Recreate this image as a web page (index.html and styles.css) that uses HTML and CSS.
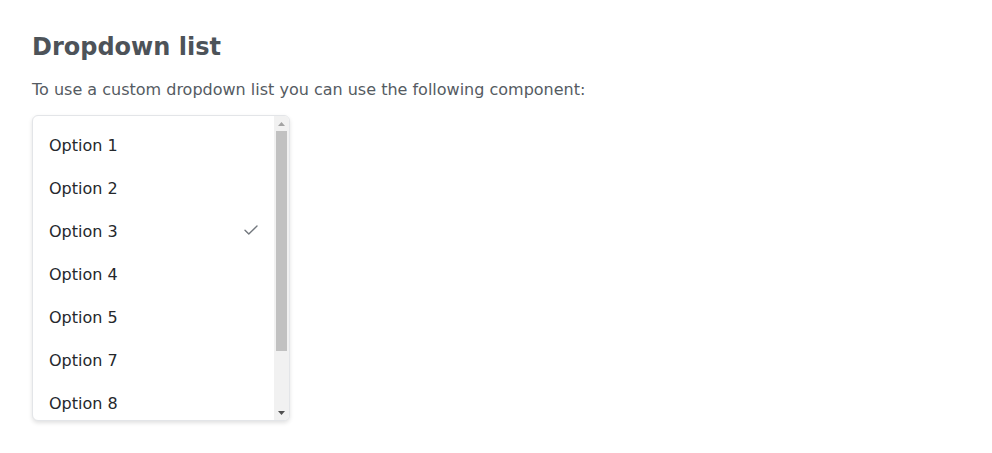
FILE: index.html
```html
<!DOCTYPE html>
<html lang="en">
<head>
<meta charset="utf-8">
<title>Dropdown list</title>
<link rel="stylesheet" href="styles.css">
</head>
<body>
<main class="page">
  <h1 class="title">Dropdown list</h1>
  <p class="intro">To use a custom dropdown list you can use the following component:</p>
  <div class="dropdown">
    <ul class="options" role="listbox">
      <li class="option">Option 1</li>
      <li class="option">Option 2</li>
      <li class="option selected">Option 3
        <svg class="check" width="14" height="10" viewBox="0 0 14 10" aria-hidden="true"><path d="M1 5.2 L4.8 9 L13 1" fill="none" stroke="currentColor" stroke-width="1.4" stroke-linecap="round" stroke-linejoin="round"/></svg>
      </li>
      <li class="option">Option 4</li>
      <li class="option">Option 5</li>
      <li class="option">Option 7</li>
      <li class="option">Option 8</li>
    </ul>
    <div class="scrollbar" aria-hidden="true">
      <div class="sb-button">
        <svg width="7" height="4" viewBox="0 0 7 4"><path d="M3.5 0 L7 4 L0 4 Z" fill="#a3a3a3"/></svg>
      </div>
      <div class="sb-track">
        <div class="sb-thumb"></div>
      </div>
      <div class="sb-button">
        <svg width="7" height="4" viewBox="0 0 7 4"><path d="M0 0 L7 0 L3.5 4 Z" fill="#505050"/></svg>
      </div>
    </div>
  </div>
</main>
</body>
</html>
```

FILE: styles.css
```css
html, body {
  margin: 0;
  padding: 0;
  background: #ffffff;
}

body {
  font-family: "DejaVu Sans", sans-serif;
}

.page {
  padding: 33px 32px 32px;
}

.title {
  margin: 0 0 16px;
  font-size: 24px;
  line-height: 29px;
  font-weight: bold;
  color: #4d5359;
}

.intro {
  margin: 0 0 13px;
  font-size: 16px;
  line-height: 24px;
  color: #555b62;
}

.dropdown {
  display: flex;
  width: 256px;
  height: 304px;
  border: 1px solid #e3e5e8;
  border-radius: 6px;
  box-shadow: 0 2px 4px rgba(0, 0, 0, 0.12);
  background: #ffffff;
  overflow: hidden;
}

.options {
  flex: 1;
  list-style: none;
  margin: 0;
  padding: 8px 0 0;
  overflow: hidden;
}

.option {
  display: flex;
  align-items: center;
  justify-content: space-between;
  height: 43px;
  padding: 0 16px;
  font-size: 16px;
  color: #25282c;
}

.check {
  color: #73787e;
  margin-top: -3px;
}

.scrollbar {
  width: 15px;
  display: flex;
  flex-direction: column;
  background: #f1f1f1;
}

.sb-button {
  height: 15px;
  display: flex;
  align-items: center;
  justify-content: center;
  flex: none;
}

.sb-track {
  flex: 1;
  padding: 0 2px;
}

.sb-thumb {
  height: 220px;
  background: #c1c1c1;
}
```
